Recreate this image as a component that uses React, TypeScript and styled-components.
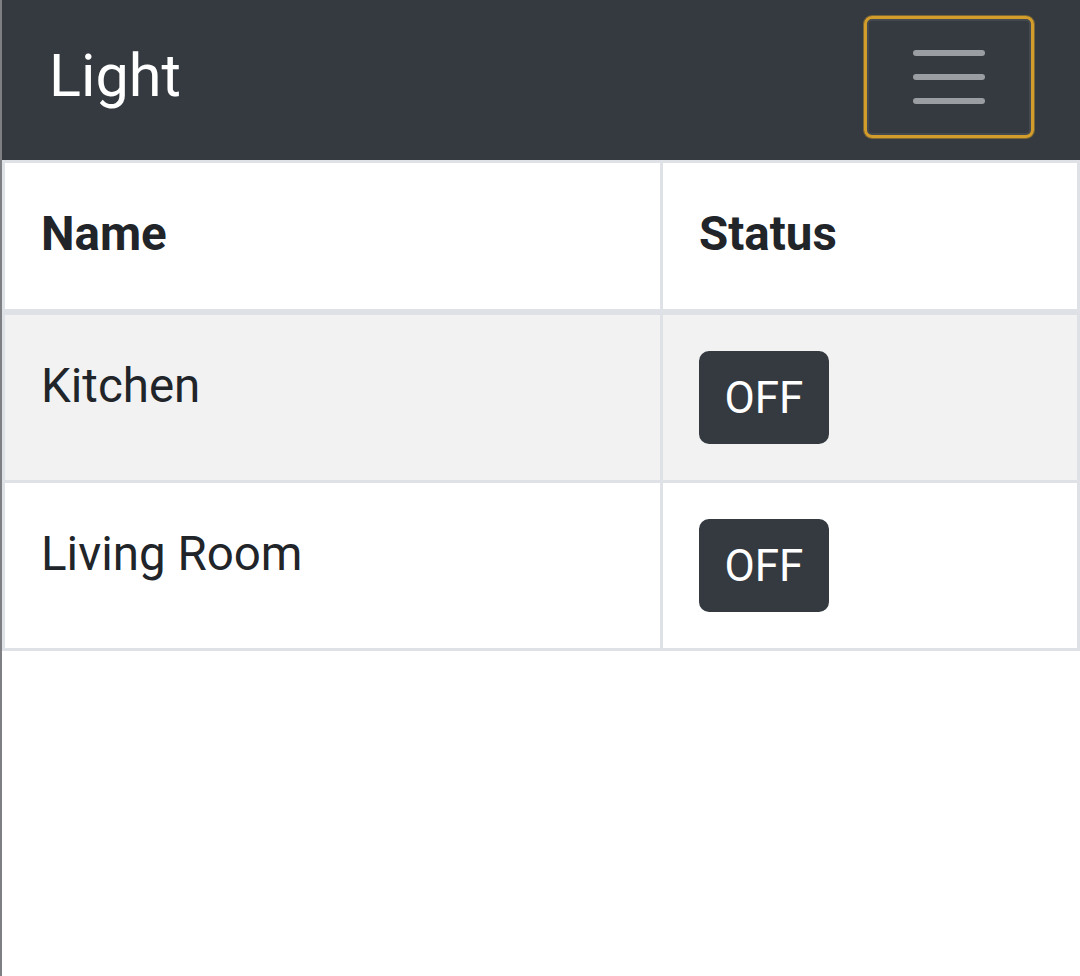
import React from "react";
import styled, { createGlobalStyle } from "styled-components";

const GlobalStyle = createGlobalStyle`
  html, body {
    margin: 0;
    padding: 0;
    background: #ffffff;
  }
  body {
    font-family: Roboto, "Liberation Sans", Arial, sans-serif;
    color: #212529;
    min-height: 976px;
    box-sizing: border-box;
    border-left: 2px solid #7d7f82;
  }
  *, *::before, *::after { box-sizing: border-box; }
`;

const Page = styled.div`
  display: flex;
  flex-direction: column;
`;

const Navbar = styled.nav`
  display: flex;
  align-items: center;
  justify-content: space-between;
  height: 160px;
  padding: 0 46px 7px 47px;
  background: #343a40;
`;

const Brand = styled.a`
  font-size: 59.4px;
  line-height: 1.5;
  color: #ffffff;
  text-decoration: none;
  font-weight: 400;
`;

const Toggler = styled.button`
  width: 170px;
  height: 122px;
  display: flex;
  align-items: center;
  justify-content: center;
  background: transparent;
  border: 3px solid #d39d2b;
  border-radius: 8px;
  box-shadow: 0 0 0 1px rgba(211, 157, 43, 0.45),
    inset 0 0 0 2px rgba(255, 255, 255, 0.08);
  padding: 0;
  cursor: pointer;
`;

const Bars = styled.span`
  display: flex;
  flex-direction: column;
  gap: 18px;
  width: 72px;
`;

const Bar = styled.span`
  display: block;
  height: 6px;
  border-radius: 3px;
  background: #9a9da1;
`;

const Table = styled.table`
  width: 1078px;
  border-collapse: collapse;
  table-layout: fixed;
  font-size: 47.5px;
  line-height: 1.5;
`;

const HeadCell = styled.th<{ $w?: number }>`
  ${(p) => (p.$w ? `width: ${p.$w}px;` : "")}
  text-align: left;
  vertical-align: bottom;
  font-weight: 700;
  padding: 36px 35px 39px 36px;
  border: 3px solid #dee2e6;
  border-bottom-width: 6px;
`;

const Row = styled.tr<{ $striped?: boolean }>`
  background: ${(p) => (p.$striped ? "#f2f2f2" : "#ffffff")};
`;

const Cell = styled.td`
  vertical-align: top;
  padding: 36px 35px 36px 36px;
  border: 3px solid #dee2e6;
`;

const StatusButton = styled.button`
  display: inline-flex;
  align-items: center;
  justify-content: center;
  width: 130px;
  height: 93px;
  font-family: Roboto, "Liberation Sans", Arial, sans-serif;
  font-size: 44px;
  line-height: 1.5;
  color: #ffffff;
  background: #343a40;
  border: 3px solid #343a40;
  border-radius: 10px;
  padding: 0;
  cursor: pointer;
`;

const lights = [
  { name: "Kitchen", on: false },
  { name: "Living Room", on: false },
];

export default function App() {
  return (
    <Page>
      <GlobalStyle />
      <Navbar>
        <Brand href="#">Light</Brand>
        <Toggler aria-label="Toggle navigation">
          <Bars>
            <Bar />
            <Bar />
            <Bar />
          </Bars>
        </Toggler>
      </Navbar>
      <Table>
        <thead>
          <tr>
            <HeadCell $w={658}>Name</HeadCell>
            <HeadCell>Status</HeadCell>
          </tr>
        </thead>
        <tbody>
          {lights.map((l, i) => (
            <Row key={l.name} $striped={i % 2 === 0}>
              <Cell>{l.name}</Cell>
              <Cell>
                <StatusButton>{l.on ? "ON" : "OFF"}</StatusButton>
              </Cell>
            </Row>
          ))}
        </tbody>
      </Table>
    </Page>
  );
}
